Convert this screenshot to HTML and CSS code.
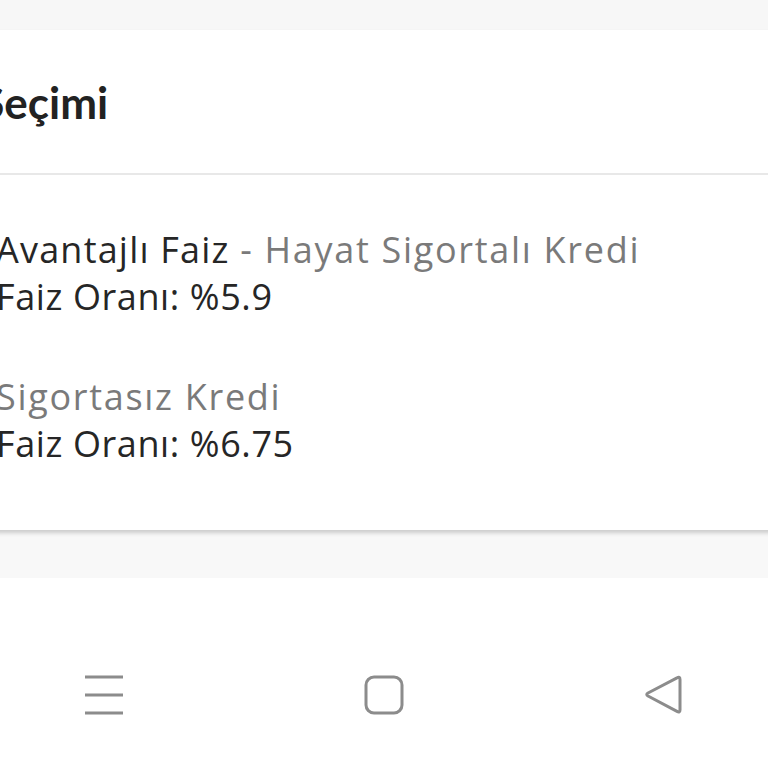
FILE: index.html
```html
<!DOCTYPE html>
<html lang="tr">

<head>
    <meta charset="UTF-8">
    <meta name="viewport" content="width=device-width, initial-scale=1.0">
    <title>Kredi Seçimi</title>
    <link rel="stylesheet" href="styles.css">
</head>

<body>
    <div class="topBar"></div>
    <div class="card">
        <div class="cardHead">
            <h2 class="title">Kredi Seçimi</h2>
        </div>
        <div class="cardBody">
            <div class="option">
                <p class="name">Avantajlı Faiz <span class="sub">- Hayat Sigortalı Kredi</span></p>
                <p class="rate">Faiz Oranı: %5.9</p>
            </div>
            <div class="option">
                <p class="name"><span class="sub">Sigortasız Kredi</span></p>
                <p class="rate">Faiz Oranı: %6.75</p>
            </div>
        </div>
    </div>
    <div class="band"></div>
    <div class="navBar">
        <div class="navBtn">
            <svg width="40" height="40" viewBox="0 0 40 40">
                <path d="M1 2H39M1 20H39M1 38H39" stroke="#8c8c8c" stroke-width="3" fill="none" />
            </svg>
        </div>
        <div class="navBtn">
            <svg width="40" height="40" viewBox="0 0 40 40">
                <rect x="2" y="2" width="36" height="36" rx="8" stroke="#8c8c8c" stroke-width="3" fill="none" />
            </svg>
        </div>
        <div class="navBtn">
            <svg width="40" height="40" viewBox="0 0 40 40">
                <path d="M36 4.5Q36 1 33 2.8L4 18Q1.5 19.5 4 21L33 36.4Q36 38 36 35Z" stroke="#8c8c8c" stroke-width="3" fill="none" stroke-linejoin="round" />
            </svg>
        </div>
    </div>
</body>

</html>
```

FILE: styles.css
```css
* {
    margin: 0;
    padding: 0;
}

body {
    width: 768px;
    height: 768px;
    overflow: hidden;
    background-color: #ffffff;
    font-family: "Open Sans", "Liberation Sans", sans-serif;
}

.topBar {
    height: 30px;
    background-color: #f7f7f7;
}

.card {
    position: relative;
    margin: 0 -40px 0 -200px;
    background-color: #ffffff;
    box-shadow: 0 3px 4px rgba(0, 0, 0, .18);
}

.cardHead {
    display: flex;
    align-items: center;
    height: 143px;
    border-bottom: 2px solid #e8e8e8;
}

.title {
    font-family: "Lato", "Liberation Sans", sans-serif;
    font-weight: bold;
    font-size: 44px;
    color: #222222;
    margin-left: 64px;
}

.cardBody {
    height: 355px;
    padding: 51px 0 0 196px;
    box-sizing: border-box;
}

.option {
    margin-bottom: 53px;
}

.option p {
    font-size: 36px;
    line-height: 47px;
    letter-spacing: .6px;
    color: #262626;
}

.option .name {
    letter-spacing: 1.2px;
}

.option .sub {
    letter-spacing: 1.7px;
    color: #7a7a7a;
}

.band {
    height: 48px;
    background-color: #f8f8f8;
}

.navBar {
    display: flex;
    justify-content: space-between;
    padding: 97px 84px 0 84px;
}

.navBtn {
    width: 40px;
    height: 40px;
}

.navBtn svg {
    display: block;
}
```
